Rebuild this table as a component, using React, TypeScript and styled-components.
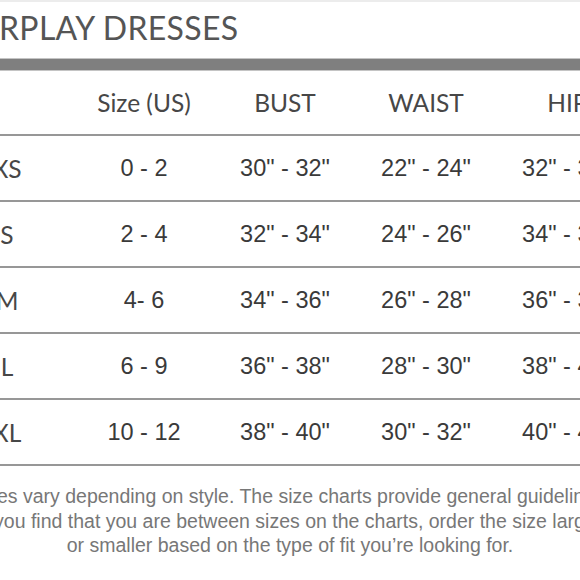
import * as React from 'react';
import styled, { createGlobalStyle } from 'styled-components';

interface SizeRow {
  label: string;
  us: string;
  bust: string;
  waist: string;
  hips: string;
}

const rows: SizeRow[] = [
  { label: 'XS', us: '0 - 2', bust: '30" - 32"', waist: '22" - 24"', hips: '32" - 34"' },
  { label: 'S', us: '2 - 4', bust: '32" - 34"', waist: '24" - 26"', hips: '34" - 36"' },
  { label: 'M', us: '4- 6', bust: '34" - 36"', waist: '26" - 28"', hips: '36" - 38"' },
  { label: 'L', us: '6 - 9', bust: '36" - 38"', waist: '28" - 30"', hips: '38" - 40"' },
  { label: 'XL', us: '10 - 12', bust: '38" - 40"', waist: '30" - 32"', hips: '40" - 42"' },
];

const GlobalStyle = createGlobalStyle`
  html, body {
    margin: 0;
    padding: 0;
    background: #ffffff;
    overflow: hidden;
  }
`;

const Frame = styled.div`
  width: 580px;
  height: 580px;
  overflow: hidden;
  background: #ffffff;
`;

// the chart is wider than the window, so it is cropped on both sides
const Sheet = styled.div`
  width: 720px;
  margin-left: -70px;
  border-top: 2px solid #ececec;
`;

const Title = styled.h1`
  margin: 0;
  padding: 6px 0 0 3px;
  box-sizing: border-box;
  height: 56px;
  font-family: Lato, 'Open Sans', sans-serif;
  font-weight: 400;
  font-size: 32px;
  line-height: 40px;
  color: #555555;
  letter-spacing: 0.3px;
  white-space: nowrap;
`;

const Rule = styled.div`
  height: 11px;
  background: #7f7f7f;
  border-top: 1px solid #c4c4c4;
  border-bottom: 1px solid #c4c4c4;
`;

const Table = styled.div`
  width: 697px;
  margin-left: 10.5px;
  display: grid;
  grid-template-columns: 133px repeat(4, 141px);
`;

const Row = styled.div`
  display: contents;
`;

const Cell = styled.div<{ $head?: boolean; $label?: boolean; $nudge?: number }>`
  height: ${p => (p.$head ? 63 : 64)}px;
  display: flex;
  align-items: center;
  justify-content: center;
  padding-left: ${p => p.$nudge ?? 0}px;
  border-bottom: 2px solid #979797;
  font-family: ${p => (p.$head || p.$label ? "Lato, 'Open Sans', sans-serif" : "'Liberation Sans', Arial, sans-serif")};
  font-size: ${p => (p.$head || p.$label ? 24.5 : 23.5)}px;
  color: ${p => (p.$head || p.$label ? '#474747' : '#3a3a3a')};
  white-space: nowrap;
`;

const Note = styled.p`
  margin: 18px 0 0;
  text-align: center;
  font-family: 'Liberation Sans', Arial, sans-serif;
  font-size: 19.5px;
  line-height: 24.5px;
  color: #777777;
  white-space: nowrap;
`;

export default function App() {
  return (
    <Frame>
      <GlobalStyle />
      <Sheet>
        <Title>OVERPLAY DRESSES</Title>
        <Rule />
        <Table>
          <Row>
            <Cell $head />
            <Cell $head>Size (US)</Cell>
            <Cell $head>BUST</Cell>
            <Cell $head>WAIST</Cell>
            <Cell $head $nudge={14}>HIPS</Cell>
          </Row>
          {rows.map(r => (
            <Row key={r.label}>
              <Cell $label>{r.label}</Cell>
              <Cell>{r.us}</Cell>
              <Cell>{r.bust}</Cell>
              <Cell>{r.waist}</Cell>
              <Cell>{r.hips}</Cell>
            </Row>
          ))}
        </Table>
        <Note>
          Sizes vary depending on style. The size charts provide general guidelines.
          <br />
          If you find that you are between sizes on the charts, order the size larger
          <br />
          or smaller based on the type of fit you’re looking for.
        </Note>
      </Sheet>
    </Frame>
  );
}
